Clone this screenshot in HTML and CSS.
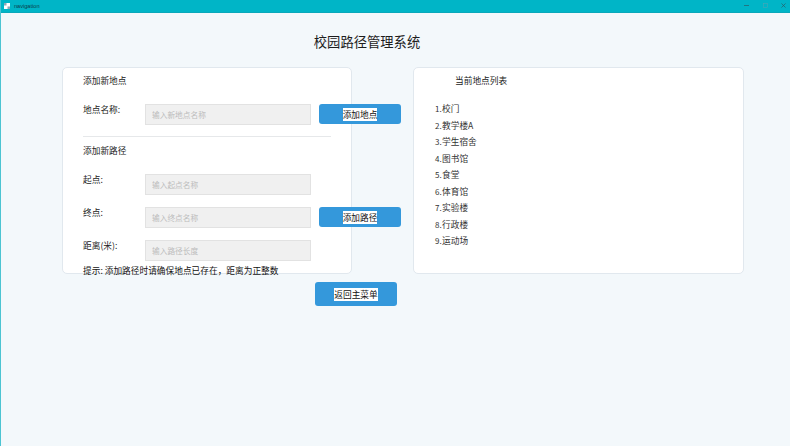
FILE: index.html
```html
<!DOCTYPE html>
<html lang="zh-CN">
<head>
<meta charset="utf-8">
<title>navigation</title>
<link rel="stylesheet" href="styles.css">
</head>
<body>
<div class="window">
  <header class="titlebar">
    <svg class="app-icon" width="6" height="6" viewBox="0 0 6 6"><rect width="6" height="6" fill="#fff"/><rect x="0" y="0" width="2.500" height="2.500" fill="#8fa6b5"/><rect x="3.500" y="3.500" width="2.500" height="2.500" fill="#8fa6b5"/></svg>
    <span class="app-name">navigation</span>
    <div class="win-controls">
      <svg width="5" height="5" viewBox="0 0 5 5"><path d="M0 2.500H5" stroke="#2c5a66" stroke-width=".7"/></svg>
      <svg width="5" height="5" viewBox="0 0 5 5"><rect x=".5" y=".5" width="4" height="4" fill="none" stroke="#4aa6b4" stroke-width=".6"/></svg>
      <svg width="5" height="5" viewBox="0 0 5 5"><path d="M.5 .5L4.500 4.500M4.500 .5L.5 4.500" stroke="#2c5a66" stroke-width=".7"/></svg>
    </div>
  </header>
  <main class="content">
    <h1 class="page-title">校园路径管理系统</h1>
    <div class="panels">
      <section class="card form-card">
        <h2 class="card-heading">添加新地点</h2>
        <div class="row row-first">
          <label class="field-label">地点名称:</label>
          <input class="field" placeholder="输入新地点名称">
          <button class="btn"><span class="btn-text">添加地点</span></button>
        </div>
        <hr class="divider">
        <h2 class="card-heading heading-route">添加新路径</h2>
        <div class="row row-start">
          <label class="field-label">起点:</label>
          <input class="field" placeholder="输入起点名称">
        </div>
        <div class="row">
          <label class="field-label">终点:</label>
          <input class="field" placeholder="输入终点名称">
          <button class="btn"><span class="btn-text">添加路径</span></button>
        </div>
        <div class="row">
          <label class="field-label">距离(米):</label>
          <input class="field" placeholder="输入路径长度">
        </div>
        <p class="tip">提示: 添加路径时请确保地点已存在，距离为正整数</p>
      </section>
      <section class="card list-card">
        <h2 class="card-heading list-heading">当前地点列表</h2>
        <ol class="places">
          <li>校门</li>
          <li>教学楼A</li>
          <li>学生宿舍</li>
          <li>图书馆</li>
          <li>食堂</li>
          <li>体育馆</li>
          <li>实验楼</li>
          <li>行政楼</li>
          <li>运动场</li>
        </ol>
      </section>
    </div>
    <div class="footer-row">
      <button class="btn btn-back"><span class="btn-text">返回主菜单</span></button>
    </div>
  </main>
</div>
</body>
</html>
```
FILE: styles.css
```css
* { box-sizing: border-box; }
html, body { margin: 0; height: 100%; }
body {
  font-family: "Noto Sans CJK SC", "Liberation Sans", sans-serif;
  font-size: 8.7px;
  color: #222;
  overflow: hidden;
}
.window {
  width: 790px;
  height: 446px;
  display: flex;
  flex-direction: column;
  background: #f3f8fb;
  border-left: 1px solid #4cc4d2;
}
.titlebar {
  height: 13px;
  flex: none;
  display: flex;
  align-items: center;
  padding: 0 4px 1px 3px;
  background: #00b5c7;
  border-bottom: 1px solid #0aa8ba;
}
.app-icon { flex: none; }
.app-name {
  margin-left: 4px;
  font-family: "Liberation Sans", sans-serif;
  font-size: 5.6px;
  color: #0c3d4a;
}
.win-controls {
  margin-left: auto;
  display: flex;
  gap: 13.500px;
}
.content {
  flex: 1;
  display: flex;
  flex-direction: column;
  padding: 19px 0 0 61px;
}
.page-title {
  margin: 0;
  width: 610px;
  text-align: center;
  font-size: 13.3px;
  line-height: 19px;
  font-weight: 400;
  color: #1d1d1d;
}
.panels {
  display: flex;
  gap: 61px;
  margin-top: 16px;
}
.card {
  height: 207px;
  background: #fff;
  border: 1px solid #e1e8ee;
  border-radius: 5px;
}
.form-card {
  width: 290px;
  padding: 6px 0 0 20px;
}
.list-card {
  width: 331px;
  padding: 6px 0 0 21px;
}
.card-heading {
  margin: 0;
  font-size: 8.7px;
  line-height: 13px;
  font-weight: 400;
  color: #222;
}
.list-heading { padding-left: 20px; }
.row {
  display: flex;
  align-items: flex-start;
  height: 21px;
  margin-top: 12px;
  white-space: nowrap;
}
.row-first { margin-top: 17px; }
.row-start { margin-top: 17px; }
.field-label {
  width: 62px;
  flex: none;
  margin-top: -1px;
  line-height: 13px;
  color: #222;
}
.field {
  width: 166px;
  height: 21px;
  flex: none;
  padding: 0 6px;
  font: inherit;
  font-size: 7.7px;
  background: #f0f0f0;
  border: 1px solid #e2e2e2;
  outline: none;
}
.field::placeholder { color: #bcbcbc; }
.btn {
  flex: none;
  width: 82px;
  height: 20px;
  margin-left: 8px;
  padding: 0;
  font: inherit;
  color: #111;
  background: #3498db;
  border: 0;
  border-radius: 3px;
}
.btn-text { background: #fff; }
.divider {
  width: 248px;
  height: 1px;
  margin: 11px 0 0;
  background: #e6e8ea;
  border: 0;
}
.heading-route { margin-top: 7px; }
.tip {
  margin: 3px 0 0;
  line-height: 13px;
  white-space: nowrap;
  color: #111;
}
.places {
  margin: 14px 0 0;
  padding: 0;
  list-style: none;
  counter-reset: place;
  color: #333;
}
.places li {
  height: 16.5px;
  line-height: 16.5px;
  counter-increment: place;
}
.places li::before {
  content: counter(place) ".";
  display: inline-block;
  width: 7px;
  font-size: 8px;
}
.footer-row {
  display: flex;
  margin-top: 8px;
  padding-left: 253px;
}
.btn-back {
  height: 24px;
  margin-left: 0;
}
```
